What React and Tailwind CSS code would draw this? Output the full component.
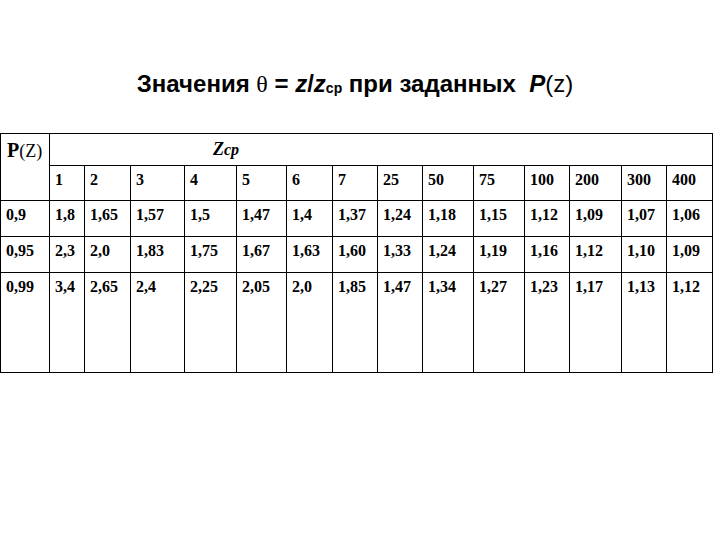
import React from "react";

const zcp = ["1", "2", "3", "4", "5", "6", "7", "25", "50", "75", "100", "200", "300", "400"];
const widths = [49, 35, 46, 54, 52, 50, 46, 45, 45, 51, 51, 45, 52, 45, 46];

const rows = [
  { p: "0,9", vals: ["1,8", "1,65", "1,57", "1,5", "1,47", "1,4", "1,37", "1,24", "1,18", "1,15", "1,12", "1,09", "1,07", "1,06"], h: "h-[36px]" },
  { p: "0,95", vals: ["2,3", "2,0", "1,83", "1,75", "1,67", "1,63", "1,60", "1,33", "1,24", "1,19", "1,16", "1,12", "1,10", "1,09"], h: "h-[36px]" },
  { p: "0,99", vals: ["3,4", "2,65", "2,4", "2,25", "2,05", "2,0", "1,85", "1,47", "1,34", "1,27", "1,23", "1,17", "1,13", "1,12"], h: "h-[100px]" },
];

const cell = "border border-black align-top text-left pl-[5px] pt-[4px] font-bold";

export default function App() {
  return (
    <div className="w-[720px] h-[540px] bg-white text-black font-['Liberation_Serif',serif] text-[16px] leading-[20px]">
      <h1 className="pt-[70px] pr-[10px] text-center font-['Liberation_Sans',Arial,sans-serif] font-bold text-[24px] leading-[28px] whitespace-pre">
        Значения <span className="font-normal font-['Liberation_Serif',serif]">θ</span> ={" "}
        <i>z</i>/<i>z</i>
        <span className="text-[14px] align-[-1px]">ср</span> при заданных{"  "}
        <i>P</i>
        <span className="font-normal">(z)</span>
      </h1>

      <table className="mt-[31px] table-fixed border-collapse w-[713px]">
        <colgroup>
          {widths.map((w, i) => (
            <col key={i} style={{ width: w }} />
          ))}
        </colgroup>
        <tbody>
          <tr className="h-[32px]">
            <th rowSpan={2} className="border border-black align-top text-left pl-[6px] pt-[6px] font-normal">
              <span className="font-bold text-[20px]">P</span>
              <span className="text-[18px]">(Z)</span>
            </th>
            <th colSpan={14} className="border border-black align-top text-left pl-[163px] pt-[5px] font-bold italic text-[18px]">
              Z<span className="text-[16px]">cp</span>
            </th>
          </tr>
          <tr className="h-[35px]">
            {zcp.map((z) => (
              <td key={z} className={cell}>
                {z}
              </td>
            ))}
          </tr>
          {rows.map((r) => (
            <tr key={r.p} className={r.h}>
              <td className={cell}>{r.p}</td>
              {r.vals.map((v, i) => (
                <td key={i} className={cell}>
                  {v}
                </td>
              ))}
            </tr>
          ))}
        </tbody>
      </table>
    </div>
  );
}
